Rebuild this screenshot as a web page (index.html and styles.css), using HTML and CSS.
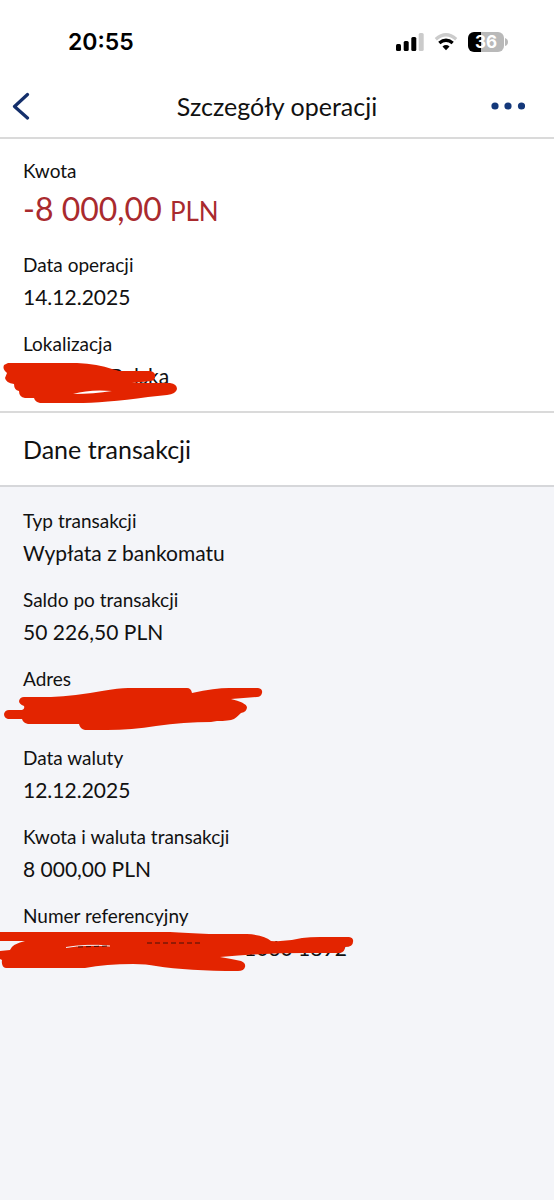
FILE: index.html
```html
<!DOCTYPE html>
<html lang="pl">
<head>
<meta charset="utf-8">
<meta name="viewport" content="width=device-width, initial-scale=1">
<title>Szczegóły operacji</title>
<link rel="stylesheet" href="styles.css">
</head>
<body>
<div class="status">
  <time class="clock">20:55</time>
  <div class="status-icons">
    <svg class="signal" width="28" height="20" viewBox="0 0 28 20" aria-hidden="true">
      <rect x="0" y="12" width="5" height="7" rx="1.5"/>
      <rect x="7.700" y="9" width="5" height="10" rx="1.5"/>
      <rect x="15.300" y="5" width="5" height="14" rx="1.5"/>
      <rect x="22.700" y="1" width="5" height="18" rx="1.5" fill="#cbcbcb"/>
    </svg>
    <svg class="wifi" width="24" height="18" viewBox="0 0 24 18" aria-hidden="true">
      <path d="M1.800 6.200Q12-2.700 22.200 6.200" fill="none" stroke="#cbcbcb" stroke-width="3.200"/>
      <path d="M5.300 10.100Q12 4.400 18.700 10.100" fill="none" stroke="#000" stroke-width="3.300"/>
      <path d="M8.500 13.500Q12 10.600 15.500 13.500L12 17.200Z"/>
    </svg>
    <div class="battery"><span class="battery-level">36</span><svg width="3" height="8" viewBox="0 0 3 8" aria-hidden="true"><path d="M0 0Q3 1 3 4T0 8Z" fill="#b9b9b9"/></svg></div>
  </div>
</div>
<header class="topbar">
  <button class="icon-button back" aria-label="Wstecz">
    <svg width="18" height="28" viewBox="0 0 18 28"><path d="M15.500 2.500L2.500 14.500L15.500 26" fill="none" stroke="#142f6b" stroke-width="3.200" stroke-linecap="round" stroke-linejoin="round"/></svg>
  </button>
  <h1 class="title">Szczegóły operacji</h1>
  <button class="icon-button more" aria-label="Więcej opcji">
    <svg width="34" height="8" viewBox="0 0 34 8" fill="#14387a"><circle cx="4" cy="4" r="3.600"/><circle cx="17" cy="4" r="3.600"/><circle cx="30.500" cy="4" r="3.600"/></svg>
  </button>
</header>
<main class="content">
  <dl class="details summary">
    <div class="item"><dt>Kwota</dt><dd class="amount">-8 000,00 <span class="currency">PLN</span></dd></div>
    <div class="item"><dt>Data operacji</dt><dd>14.12.2025</dd></div>
    <div class="item">
      <dt>Lokalizacja</dt><dd class="after-place">Polska</dd>
      <svg class="marker" width="360" height="80" viewBox="0 329 360 80" aria-hidden="true">
        <path d="M8 362H77Q98 363 112 368L119 370H150Q156 371 155 376Q155 379 151 380L132 382L170 382Q177 383 177 388Q176 393 167 394L148 396Q104 402 76 402H40Q35 401 34 397H25Q19 396 19 390Q14 389 14 383Q6 382 5 377L7 372Q2 368 4 364Z"/>
        <path d="M73 393Q90 388 112 390Q94 393 73 393Z" fill="#fff"/>
      </svg>
    </div>
  </dl>
  <h2 class="section-title">Dane transakcji</h2>
  <dl class="details transaction">
    <div class="item"><dt>Typ transakcji</dt><dd>Wypłata z bankomatu</dd></div>
    <div class="item"><dt>Saldo po transakcji</dt><dd>50 226,50 PLN</dd></div>
    <div class="item">
      <dt>Adres</dt><dd></dd>
      <svg class="marker" width="360" height="80" viewBox="0 666 360 80" aria-hidden="true">
        <path d="M24 698H51Q75 697 102 692Q119 689 128 689H187Q191 689 192 694Q215 689 229 689H258Q263 690 262 694Q261 698 257 698L231 700Q245 703 247 708Q247 713 241 714Q237 718 234 720Q229 722 217 722L211 723Q184 723 156 727Q132 731 107 731H85Q80 730 79 725H28Q23 724 22 720H8Q4 719 4 715Q5 711 9 711H22Q25 710 24 707Q19 705 19 702Q20 698 24 698Z"/>
      </svg>
    </div>
    <div class="item"><dt>Data waluty</dt><dd>12.12.2025</dd></div>
    <div class="item"><dt>Kwota i waluta transakcji</dt><dd>8 000,00 PLN</dd></div>
    <div class="item">
      <dt>Numer referencyjny</dt><dd class="after-number">1060 1892</dd>
      <svg class="marker" width="360" height="80" viewBox="0 903 360 80" aria-hidden="true">
        <path d="M0 933H170Q187 934 209 935H247Q265 936 271 942Q287 943 302 939Q310 938 320 938H349Q354 939 353 943Q353 948 345 948Q345 953 340 954H305Q264 954 220 958Q232 960 241 962Q246 964 245 968Q244 972 238 972Q188 972 156 967Q147 965 133 965Q106 965 85 969H6Q1 968 2 961L0 960V952L10 951Q12 945 25 942L0 942Z"/>
        <path d="M66 948.500Q86 945 110 947" fill="none" stroke="#f4f5f9" stroke-width="1"/>
        <path d="M78 948L109 947M147 944L200 944" fill="none" stroke="#451008" stroke-width="1" stroke-dasharray="5 3"/>
      </svg>
    </div>
  </dl>
</main>
</body>
</html>
```

FILE: styles.css
```css
* { box-sizing: border-box; }
body {
  margin: 0;
  min-height: 100vh;
  display: flex;
  flex-direction: column;
  background: #fff;
  color: #111;
  font-family: Lato, "Noto Sans", sans-serif;
}
.status {
  height: 75px;
  padding: 8px 46px 0 68px;
  display: flex;
  align-items: center;
  justify-content: space-between;
}
.clock {
  font: 600 23px/28px Inter, "Liberation Sans", sans-serif;
  color: #000;
}
.status-icons {
  display: flex;
  align-items: center;
  gap: 10px;
}
.battery {
  display: flex;
  align-items: center;
  gap: 1px;
}
.battery-level {
  width: 36px;
  border-radius: 6px;
  background: linear-gradient(to right, #000 36%, #b9b9b9 36%);
  color: #fff;
  font: 700 17px/20px Inter, "Liberation Sans", sans-serif;
  text-align: center;
}
.topbar {
  height: 64px;
  padding: 0 29px 0 12px;
  display: grid;
  grid-template-columns: 1fr auto 1fr;
  align-items: center;
  border-bottom: 2px solid #dadada;
}
.icon-button {
  display: flex;
  padding: 0;
  border: 0;
  background: none;
}
.back { justify-self: start; }
.more { justify-self: end; }
.title, .section-title {
  margin: 0;
  font-weight: 400;
  font-size: 25px;
}
.title { padding-left: 17px; }
.content {
  flex: 1;
  display: flex;
  flex-direction: column;
}
.details {
  margin: 0;
  padding: 18px 23px;
  display: flex;
  flex-direction: column;
  gap: 16px;
}
.item { position: relative; }
dt {
  font-size: 19px;
  line-height: 28px;
}
dd {
  margin: 0;
  min-height: 35px;
  font-size: 21px;
  line-height: 35px;
}
.amount {
  font-size: 32px;
  line-height: 47px;
  color: #a92a2e;
}
.currency { font-size: 26px; }
.section-title {
  padding: 0 23px;
  line-height: 72px;
  border-top: 2px solid #dadada;
  border-bottom: 2px solid #d6d7da;
}
.transaction {
  flex: 1;
  padding-top: 20px;
  background: #f4f5f9;
}
.after-place { padding-left: 87px; }
.after-number { padding-left: 221px; }
.marker {
  position: absolute;
  top: 0;
  left: -23px;
  fill: #e32400;
}
```
